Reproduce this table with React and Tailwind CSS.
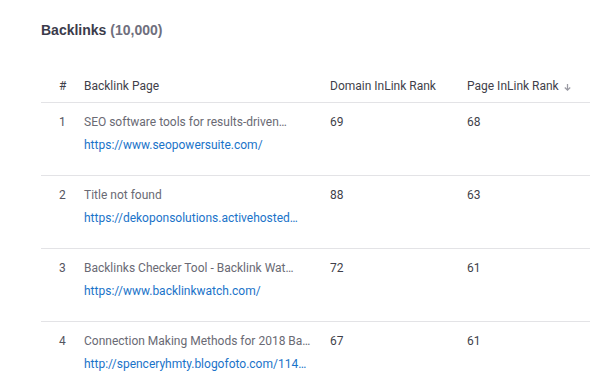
import React from 'react';

const rows = [
  { n: 1, title: 'SEO software tools for results-driven…', url: 'https://www.seopowersuite.com/', domain: 69, page: 68 },
  { n: 2, title: 'Title not found', url: 'https://dekoponsolutions.activehosted…', domain: 88, page: 63 },
  { n: 3, title: 'Backlinks Checker Tool - Backlink Wat…', url: 'https://www.backlinkwatch.com/', domain: 72, page: 61 },
  { n: 4, title: 'Connection Making Methods for 2018 Ba…', url: 'http://spenceryhmty.blogofoto.com/114…', domain: 67, page: 61 },
];

const App = () => {
  return (
    <div className="w-[590px] h-[389px] overflow-hidden bg-white" style={{ fontFamily: 'Roboto, sans-serif' }}>
      <div className="pl-[41px] pt-[21px]">
        <h1 className="text-[14px] leading-[18px] font-bold text-[#3b3b4b]" style={{ fontFamily: '"Liberation Sans", Arial, sans-serif' }}>
          Backlinks <span className="text-[#6f6f7d]">(10,000)</span>
        </h1>

        <div className="mt-[38px] text-[12px] leading-[16px]">
          {/* header */}
          <div className="flex items-start h-[26px] pt-[1px] pl-[18px] text-[#3f3f4a] border-b border-[#e3e3e6]">
            <div className="w-[25px]">#</div>
            <div className="w-[246px]">Backlink Page</div>
            <div className="w-[137px]">Domain InLink Rank</div>
            <div className="flex items-center gap-[4px]">
              Page InLink Rank
              <svg width="9" height="9" viewBox="0 0 10 10" className="text-[#9a9aa3] mt-[2px]">
                <path d="M5 1v7M2 5l3 3 3-3" fill="none" stroke="currentColor" strokeWidth="1.4" />
              </svg>
            </div>
          </div>

          {rows.map(r => (
            <div key={r.n} className="flex h-[73px] pl-[18px] pt-[11px] border-b border-[#e3e3e6]">
              <div className="w-[25px] text-[#55555f]">{r.n}</div>
              <div className="w-[246px]">
                <div className="whitespace-nowrap text-[#6a6a74]">{r.title}</div>
                <div className="whitespace-nowrap text-[#1a73c9] mt-[7px]">{r.url}</div>
              </div>
              <div className="w-[137px] text-[#3f3f4a]">{r.domain}</div>
              <div className="text-[#3f3f4a]">{r.page}</div>
            </div>
          ))}
        </div>
      </div>
    </div>
  );
};

export default App;
